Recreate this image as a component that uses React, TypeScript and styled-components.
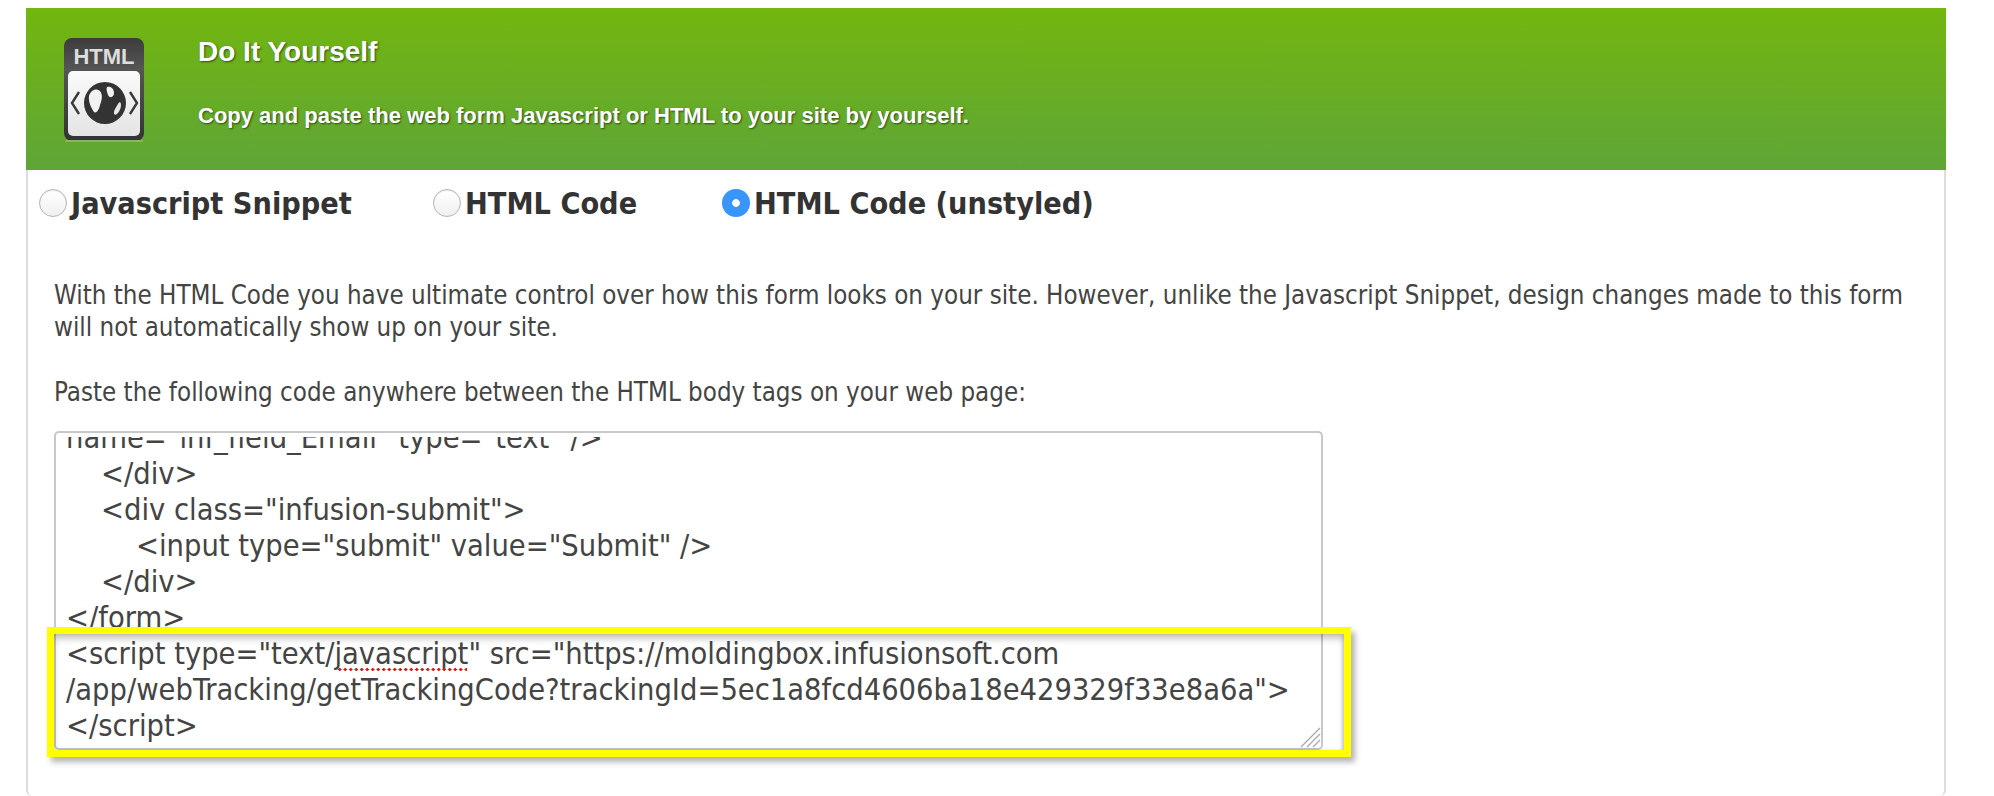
import styled, { createGlobalStyle } from 'styled-components';

const GlobalStyle = createGlobalStyle`
    html, body {
        margin: 0;
        padding: 0;
        background: #ffffff;
    }
`;

const Page = styled.div`
    width: 1994px;
    height: 796px;
    box-sizing: border-box;
    padding: 8px 48px 0 26px;
    overflow: hidden;
    display: flex;
    flex-direction: column;
`;

const Banner = styled.header`
    height: 162px;
    flex-shrink: 0;
    display: flex;
    background: linear-gradient(#72b60f, #5fa537);
    padding: 30px 0 0 38px;
    box-sizing: border-box;
    gap: 54px;
`;

const BannerText = styled.div`
    display: flex;
    flex-direction: column;
    font-family: "Liberation Sans", Arial, sans-serif;
    font-weight: bold;
    color: #ffffff;
    text-shadow: 1px 1px 2px rgba(0, 0, 0, 0.55);
`;

const BannerTitle = styled.div`
    font-size: 28px;
    line-height: 28px;
`;

const BannerSubtitle = styled.div`
    font-size: 22px;
    line-height: 24px;
    margin-top: 38px;
`;

const Panel = styled.main`
    flex: 1;
    border: 2px solid #dddddd;
    border-top: none;
    border-bottom: none;
    border-radius: 0 0 6px 6px;
    padding: 0 0 0 26px;
    font-family: "DejaVu Sans Condensed", "DejaVu Sans", sans-serif;
    color: #444444;
`;

const RadioRow = styled.div`
    display: flex;
    margin: 0 0 0 -15px;
    height: 72px;
    align-items: center;
    position: relative;
    top: -3px;
`;

const RadioOption = styled.label<{ $width: number }>`
    width: ${(p) => p.$width}px;
    display: flex;
    align-items: center;
    gap: 4px;
    font-size: 30.3px;
    font-weight: bold;
    color: #333333;
`;

const Radio = styled.input.attrs({ type: 'radio', readOnly: true })`
    appearance: none;
    width: 28px;
    height: 28px;
    margin: 0;
    border-radius: 50%;
    border: 1px solid #b5b5b5;
    box-sizing: border-box;
    background: linear-gradient(#ffffff, #f0f0f0);
    box-shadow: inset 0 1px 1px rgba(0, 0, 0, 0.08);

    &:checked {
        border: none;
        background: radial-gradient(circle, #ffffff 0 3.5px, transparent 4.2px), #3795fb;
        box-shadow: none;
    }
`;

const Paragraph = styled.p`
    margin: 0;
    font-size: 25.7px;
    line-height: 32px;
`;

const Intro = styled(Paragraph)`
    margin-top: 37px;
`;

const PasteHint = styled(Paragraph)`
    margin-top: 33px;
`;

const CodeBox = styled.div`
    position: relative;
    margin-top: 23px;
    width: 1269px;
    height: 319px;
    box-sizing: border-box;
    border: 2px solid #c8c8c8;
    border-bottom-color: #c4c4cc;
    border-radius: 5px;
    background: #ffffff;
    padding-top: 4px;
`;

const CodeScroll = styled.div`
    height: 100%;
    overflow: hidden;
    display: flex;
    flex-direction: column;
    justify-content: flex-end;
    padding: 0 0 4px 10px;
    box-sizing: border-box;
`;

const CodeLine = styled.div<{ $indent?: number }>`
    flex-shrink: 0;
    font-size: 30.5px;
    line-height: 36px;
    white-space: pre;
    padding-left: ${(p) => (p.$indent ?? 0) * 35}px;
`;

const Misspelled = styled.span`
    position: relative;

    &::after {
        content: "";
        position: absolute;
        left: 3px;
        right: 1px;
        bottom: 0;
        height: 3px;
        background: radial-gradient(circle at center, #f01010 1.4px, transparent 1.7px) 0 0 / 5.5px 3px repeat-x;
    }
`;

const Highlight = styled.div`
    position: absolute;
    left: -9px;
    top: 194px;
    right: -30px;
    bottom: -9px;
    border: 7px solid #ffff00;
    box-shadow: 4px 5px 6px rgba(0, 0, 0, 0.3), inset 0 5px 6px rgba(0, 0, 0, 0.22), inset -2px 0 3px rgba(0, 0, 0, 0.12);
    pointer-events: none;
`;

const Grip = styled.svg`
    position: absolute;
    right: 0;
    bottom: 0;
    width: 22px;
    height: 21px;
`;

function HtmlIcon() {
    return (
        <svg width="80" height="104" viewBox="0 0 80 104" style={{ flexShrink: 0 }}>
            <defs>
                <linearGradient id="frame" x1="0" y1="0" x2="0" y2="1">
                    <stop offset="0" stopColor="#3c3c3c" />
                    <stop offset="0.3" stopColor="#555555" />
                    <stop offset="1" stopColor="#333333" />
                </linearGradient>
                <linearGradient id="paper" x1="0" y1="0" x2="0" y2="1">
                    <stop offset="0" stopColor="#fafafa" />
                    <stop offset="1" stopColor="#e4e4e4" />
                </linearGradient>
            </defs>
            <rect x="0" y="0" width="80" height="103" rx="8" fill="url(#frame)" />
            <rect x="1" y="102" width="78" height="2" rx="1" fill="#8fb06a" />
            <text x="40" y="26" textAnchor="middle" fontFamily="Liberation Sans, Arial, sans-serif" fontWeight="bold" fontSize="22" fill="#dddddd">HTML</text>
            <rect x="4" y="33" width="72" height="65" rx="5" fill="url(#paper)" />
            <path d="M15 54 L8 65 L15 76" fill="none" stroke="#3a3a3a" strokeWidth="2.4" />
            <path d="M66 54 L73 65 L66 76" fill="none" stroke="#3a3a3a" strokeWidth="2.4" />
            <circle cx="41" cy="65" r="21" fill="#333333" />
            <path d="M25 58 C27 51 33 50 36 53 C39 57 38 62 36 67 C35 72 32 76 30 74 C28 71 24 64 25 58 Z" fill="#f2f2f2" />
            <path d="M43 49 C47 48 50 51 50 55 C50 59 46 61 44 57 C43 54 42 51 43 49 Z" fill="#f2f2f2" />
            <path d="M56 64 C58 66 57 72 53 76 C50 78 49 75 51 71 C53 68 54 65 56 64 Z" fill="#e6e6e6" />
        </svg>
    );
}

export default function App() {
    return (
        <Page>
            <GlobalStyle />
            <Banner>
                <HtmlIcon />
                <BannerText>
                    <BannerTitle>Do It Yourself</BannerTitle>
                    <BannerSubtitle>Copy and paste the web form Javascript or HTML to your site by yourself.</BannerSubtitle>
                </BannerText>
            </Banner>
            <Panel>
                <RadioRow>
                    <RadioOption $width={394}><Radio name="mode" />Javascript Snippet</RadioOption>
                    <RadioOption $width={289}><Radio name="mode" />HTML Code</RadioOption>
                    <RadioOption $width={400}><Radio name="mode" defaultChecked />HTML Code (unstyled)</RadioOption>
                </RadioRow>
                <Intro>
                    With the HTML Code you have ultimate control over how this form looks on your site. However, unlike the Javascript Snippet, design changes made to this form<br />
                    will not automatically show up on your site.
                </Intro>
                <PasteHint>Paste the following code anywhere between the HTML body tags on your web page:</PasteHint>
                <CodeBox>
                    <CodeScroll>
                        <CodeLine>name="inf_field_Email" type="text" /&gt;</CodeLine>
                        <CodeLine $indent={1}>&lt;/div&gt;</CodeLine>
                        <CodeLine $indent={1}>&lt;div class="infusion-submit"&gt;</CodeLine>
                        <CodeLine $indent={2}>&lt;input type="submit" value="Submit" /&gt;</CodeLine>
                        <CodeLine $indent={1}>&lt;/div&gt;</CodeLine>
                        <CodeLine>&lt;/form&gt;</CodeLine>
                        <CodeLine>&lt;script type="text/<Misspelled>javascript</Misspelled>" src="https://moldingbox.infusionsoft.com</CodeLine>
                        <CodeLine>/app/webTracking/getTrackingCode?trackingId=5ec1a8fcd4606ba18e429329f33e8a6a"&gt;</CodeLine>
                        <CodeLine>&lt;/script&gt;</CodeLine>
                    </CodeScroll>
                    <Grip viewBox="0 0 22 21">
                        <path d="M2 20 L21 1 M8 20 L21 7 M14 20 L21 13" stroke="#a8a8a8" strokeWidth="1.3" />
                    </Grip>
                    <Highlight />
                </CodeBox>
            </Panel>
        </Page>
    );
}
